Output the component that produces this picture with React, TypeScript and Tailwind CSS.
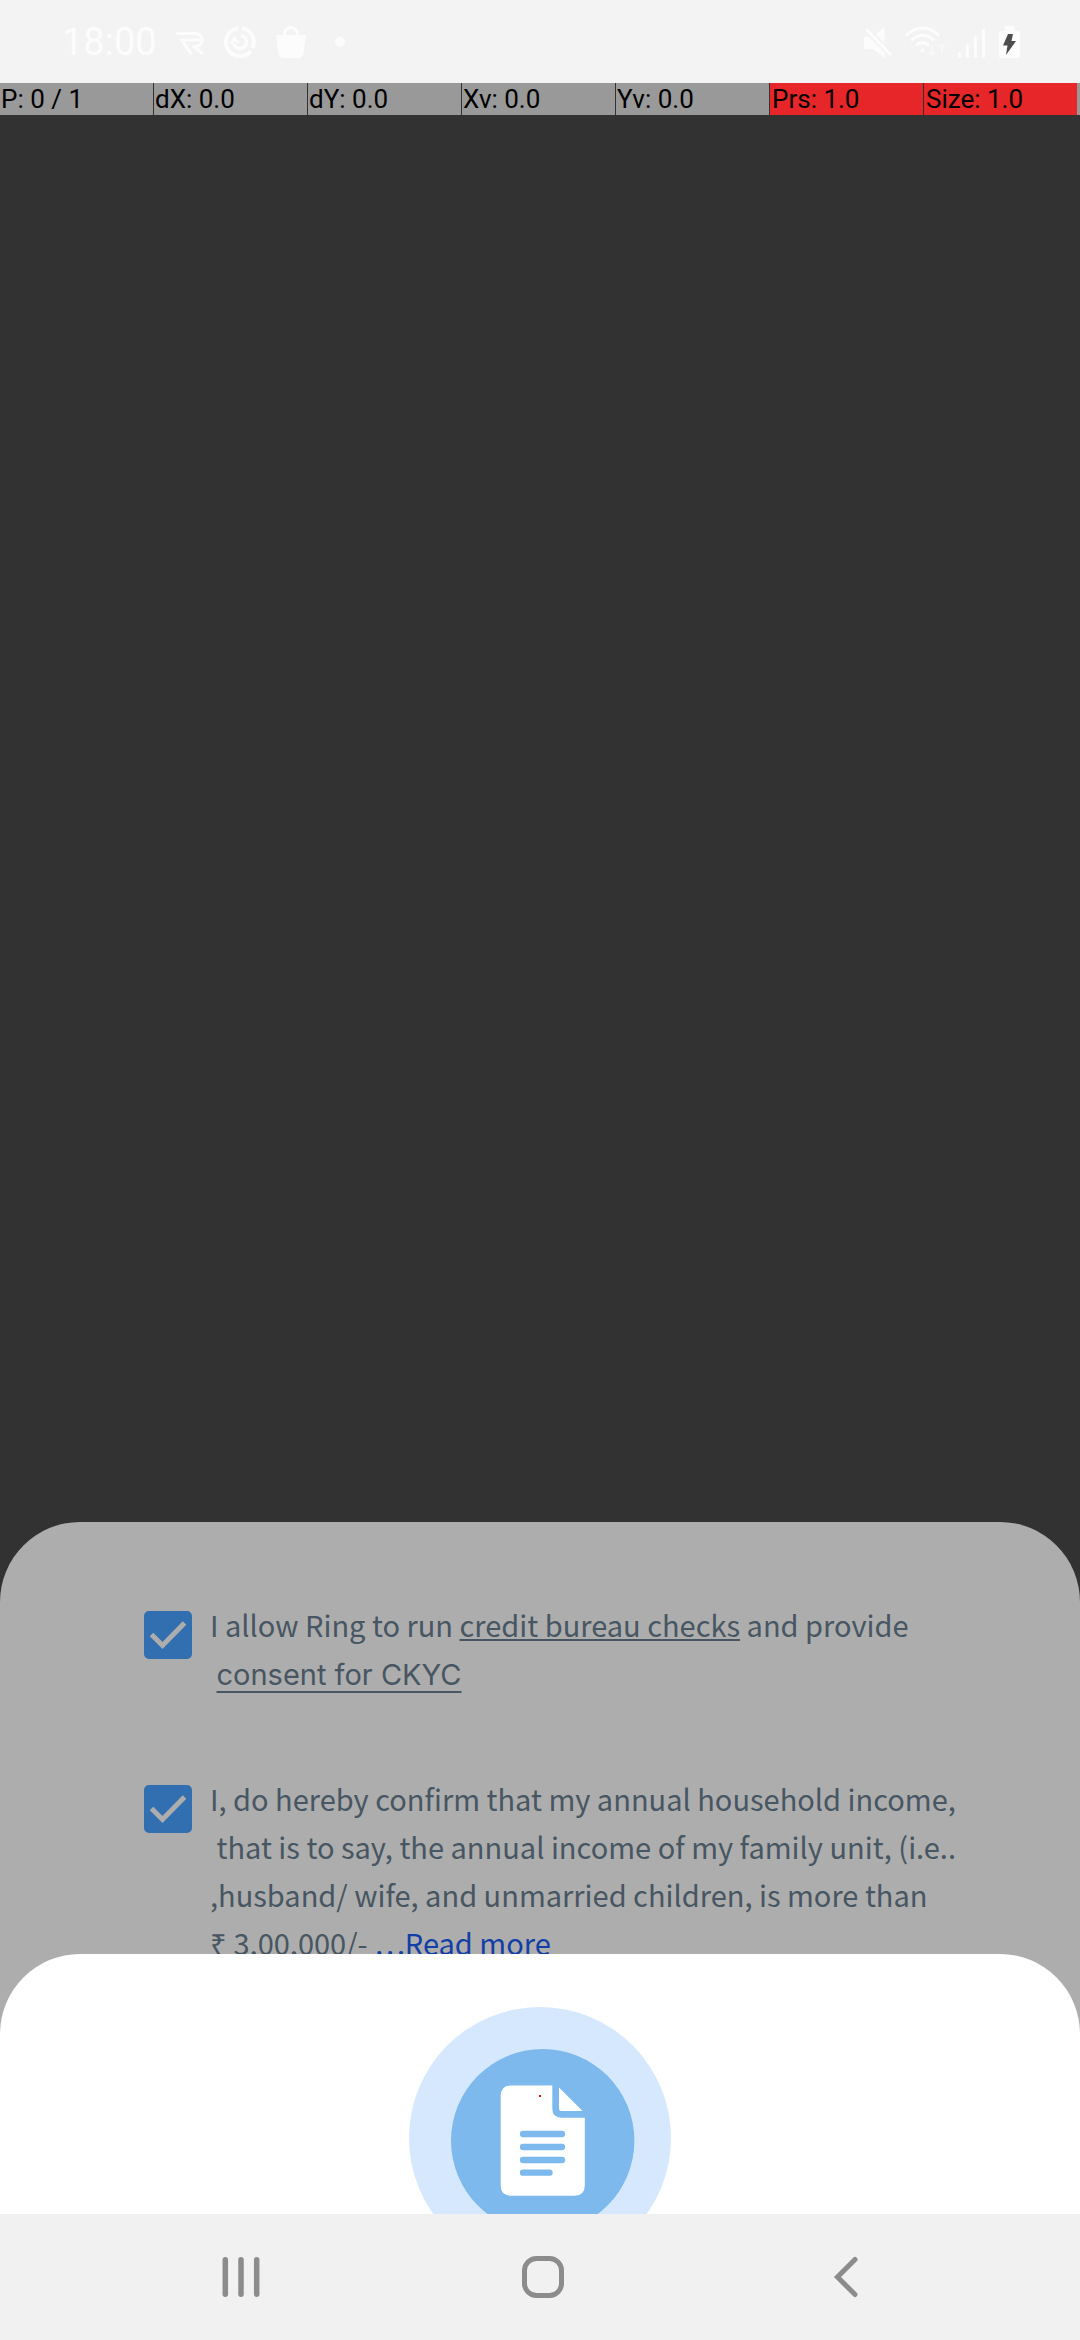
import React from "react";

const metrics = [
  { label: "P: 0 / 1", hot: false },
  { label: "dX: 0.0", hot: false },
  { label: "dY: 0.0", hot: false },
  { label: "Xv: 0.0", hot: false },
  { label: "Yv: 0.0", hot: false },
  { label: "Prs: 1.0", hot: true },
  { label: "Size: 1.0", hot: true },
];

function StatusBar() {
  return (
    <header className="flex h-[83px] items-center justify-between bg-[#f3f3f3] pl-[62px] pr-[60px] text-[#fcfcfc]">
      <div className="flex h-8 items-center">
        <span className="w-[114px] font-[Roboto,sans-serif] text-[38px] leading-8">18:00</span>
        <svg className="mr-5 h-8 w-7" viewBox="0 0 28 32" fill="none" stroke="currentColor" strokeWidth="3" strokeLinecap="round" strokeLinejoin="round">
          <path d="M1.500 7.500H19.500a6.500 6.500 0 0 1 0 13H17.500L26 27" />
          <path d="M26 14H5.500L14.500 27" />
        </svg>
        <svg className="mr-5 h-8 w-8" viewBox="0 0 32 32" fill="none" stroke="currentColor">
          <path d="M14 2.300A14 14 0 1 0 26.800 25" strokeWidth="4" />
          <path d="M18 2.300A14 14 0 0 1 28.500 22" strokeWidth="4" />
          <path d="M17 9.500A6.500 6.500 0 1 1 9.700 17.500" strokeWidth="3.500" />
          <path d="M7 18L10.500 12.500L15 17" strokeWidth="3" />
        </svg>
        <svg className="mr-[29px] h-8 w-[30px]" viewBox="0 0 30 32">
          <path d="M0 9H30L27.500 27Q26.800 32 22 32H8Q3.200 32 2.500 27Z" fill="currentColor" />
          <path d="M8.500 11V8a6.500 6.500 0 0 1 13 0V11" fill="none" stroke="currentColor" strokeWidth="3" />
        </svg>
        <span className="size-[10px] rounded-full bg-[#fcfcfc]" />
      </div>
      <div className="flex h-8 items-center">
        <svg className="mr-3 h-8 w-[29px]" viewBox="0 0 29 32" fill="currentColor">
          <path d="M0 11H5L21 27V32L9 23H0Z" />
          <path d="M12 8L20.500 1V17Z" />
          <path d="M2 3L27 29" stroke="currentColor" strokeWidth="3" />
        </svg>
        <svg className="mr-3 h-8 w-[41px]" viewBox="0 0 41 32" fill="none" stroke="currentColor" strokeWidth="3">
          <path d="M1 9.500Q17.500 -5.500 34.500 9.500" />
          <path d="M6 14.500Q17.500 4 29 14.500" />
          <path d="M11 19.500Q17.500 13.500 24 19.500" />
          <circle cx="17.500" cy="24.500" r="2" fill="currentColor" stroke="none" />
          <path d="M27 20V29M24 26L27 29.500L30 26M37 27V19M34 21.500L37 18.500L40 21.500" strokeWidth="2" opacity="0.600" />
        </svg>
        <svg className="mr-[14px] h-8 w-[27px]" viewBox="0 0 27 32" stroke="currentColor" strokeWidth="3" strokeLinecap="round">
          <path d="M1.500 27.500V30.500M9.500 20V30.500M17.500 12V30.500M25.500 4.500V30.500" />
        </svg>
        <svg className="h-8 w-[21px]" viewBox="0 0 21 32">
          <path d="M5.500 0H15.500V5H19Q21 5 21 7V30Q21 32 19 32H2Q0 32 0 30V7Q0 5 2 5H5.500Z" fill="currentColor" />
          <path d="M9 8H14L12.500 15H17L7 29L8.500 19.500H4Z" fill="#4d4d4d" />
        </svg>
      </div>
    </header>
  );
}

function PointerBar() {
  return (
    <div className="flex h-8 bg-[#999999] font-[Roboto,sans-serif] text-[26px] leading-8 text-black">
      <div className="grid flex-1 grid-cols-7 gap-px bg-[#323232]">
        {metrics.map((m) => (
          <span key={m.label} className={m.hot ? "bg-[#e62628] pl-[2px]" : "bg-[#999999] pl-px"}>
            {m.label}
          </span>
        ))}
      </div>
      <div className="w-[3px]" />
    </div>
  );
}

function Consent({ id, children }: { id: string; children: React.ReactNode }) {
  return (
    <div className="flex items-start">
      <div className="relative mt-[11px] mr-[18px] size-12 shrink-0">
        <input
          id={id}
          type="checkbox"
          defaultChecked
          aria-labelledby={id + "-label"}
          className="peer block size-12 appearance-none rounded-[5px] border-2 border-[#326fb1] checked:bg-[#326fb1]"
        />
        <svg className="pointer-events-none absolute inset-0 hidden size-12 peer-checked:block" viewBox="0 0 48 48" fill="none" stroke="#adadad" strokeWidth="5">
          <path d="M7.500 23.500L18.500 34.500L40.500 12" />
        </svg>
      </div>
      <label id={id + "-label"} htmlFor={id} className="whitespace-pre text-[29px] leading-12">
        {children}
      </label>
    </div>
  );
}

function DocumentBadge() {
  return (
    <svg className="size-[262px] shrink-0" viewBox="0 0 262 262" aria-hidden="true">
      <circle cx="131" cy="131" r="131" fill="#d6e8fe" />
      <circle cx="133.700" cy="133.700" r="91.700" fill="#7db9ec" />
      <path d="M102 78.500H143.300V101.500Q143.300 110.700 152.500 110.700H175.800V178.500Q175.800 188.700 165.500 188.700H102Q91.700 188.700 91.700 178.500V89Q91.700 78.500 102 78.500Z" fill="#fff" />
      <path d="M150 80.500L173.500 104H152.500Q150 104 150 101.500Z" fill="#fff" />
      <path d="M114 127H153M114 140H153M114 153H153M114 165.700H140.500" stroke="#7db9ec" strokeWidth="6.300" strokeLinecap="round" />
      <rect x="130" y="88" width="2" height="2" fill="#f00" />
    </svg>
  );
}

function NavBar() {
  return (
    <nav className="grid h-[126px] shrink-0 grid-cols-3 bg-[#f1f1f1] pr-[84px] pl-[90px] text-[#8c8c8c]">
      <button aria-label="Recent apps" className="flex items-center justify-center">
        <svg className="size-[42px]" viewBox="0 0 42 42" stroke="currentColor" strokeWidth="5.500" strokeLinecap="round">
          <path d="M5.300 3.700V38.300M21 3.700V38.300M36.700 3.700V38.300" />
        </svg>
      </button>
      <button aria-label="Home" className="flex items-center justify-center">
        <svg className="size-[42px]" viewBox="0 0 42 42" fill="none" stroke="currentColor" strokeWidth="5">
          <rect x="2.500" y="2.500" width="37" height="37" rx="12" />
        </svg>
      </button>
      <button aria-label="Back" className="flex items-center justify-center">
        <svg className="size-[42px]" viewBox="0 0 42 42" fill="none" stroke="currentColor" strokeWidth="5" strokeLinecap="round">
          <path d="M31 3.500L13.500 21L31 38.500" />
        </svg>
      </button>
    </nav>
  );
}

export default function App() {
  return (
    <div className="flex min-h-screen flex-col bg-[#323232]">
      <StatusBar />
      <PointerBar />
      <main className="flex flex-1 flex-col justify-end">
        <section className="rounded-t-[80px] bg-[#adadad] font-['Noto_Sans_CJK_SC',sans-serif] text-[#475662]">
          <div className="flex h-[432px] flex-col gap-[78px] overflow-hidden px-36 pt-[78px]">
            <Consent id="bureau">
              I allow Ring to run{" "}
              <a href="#bureau-checks" className="underline decoration-2 underline-offset-2">credit bureau checks</a> and provide{"\n "}
              <a href="#ckyc" className="font-[Inter,sans-serif] leading-none underline decoration-2 underline-offset-[6px]">consent for CKYC</a>
            </Consent>
            <Consent id="income">
              {"I, do hereby confirm that my annual household income,\n that is to say, the annual income of my family unit, (i.e..\n,husband/ wife, and unmarried children, is more than\n₹ 3,00,000/- "}
              <a href="#more" className="text-[#123fa6]">…Read more</a>
            </Consent>
          </div>
          <div className="flex h-[260px] justify-center overflow-hidden rounded-t-[80px] bg-white pt-[53px]">
            <DocumentBadge />
          </div>
        </section>
      </main>
      <NavBar />
    </div>
  );
}
